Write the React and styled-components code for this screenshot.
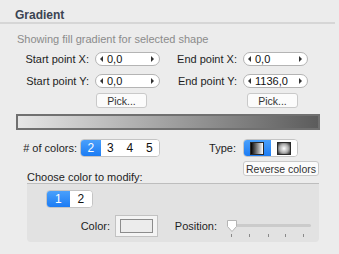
import styled, { createGlobalStyle } from 'styled-components';

const Global = createGlobalStyle`
  html, body {
    margin: 0;
    background: #ececec;
  }
  body {
    font-family: "Liberation Sans", Arial, sans-serif;
    font-size: 11px;
    color: #1e1e1e;
  }
`;

const Panel = styled.div`
  width: 339px;
  height: 254px;
  box-sizing: border-box;
  padding-top: 8px;
`;

const Header = styled.div`
  width: 320px;
  height: 14px;
  line-height: 14px;
  padding-left: 15px;
  font-weight: bold;
  font-size: 12px;
  color: #3b4453;
  border-bottom: 2px solid #d6d6d6;
`;

const Subtitle = styled.div`
  margin: 9px 0 0 17px;
  color: #8b8b8b;
  line-height: 13px;
`;

// Сетка начальной и конечной точек
const PointGrid = styled.div`
  display: grid;
  grid-template-columns: 160px 148px;
  row-gap: 8px;
  margin-top: 6px;
`;

const Field = styled.div`
  display: flex;
  justify-content: flex-end;
  align-items: center;
  gap: 6px;
  height: 14px;
`;

const Stepper = styled.div`
  height: 12px;
  border: 1px solid #b4b4b4;
  border-radius: 7px;
  background: #fff;
  display: flex;
  align-items: center;
  padding: 0 5px 0 4px;
  box-sizing: content-box;
  width: 54px;
  font-size: 11px;
  color: #111;
`;

const Arrow = styled.span`
  width: 0;
  height: 0;
  border-top: 3px solid transparent;
  border-bottom: 3px solid transparent;
  ${p => (p.$dir === 'left' ? 'border-right: 3px solid #333;' : 'border-left: 3px solid #333;')}
`;

const StepValue = styled.span`
  flex: 1;
  padding-left: 4px;
`;

const PickRow = styled.div`
  display: flex;
  margin-top: 5px;
`;

const Button = styled.div`
  height: 13px;
  border: 1px solid #c9c9c9;
  border-radius: 3px;
  background: #fbfbfb;
  color: #333;
  display: flex;
  align-items: center;
  justify-content: center;
  font-size: 10.5px;
  width: ${p => p.$w}px;
  margin-left: ${p => p.$ml ?? 0}px;
`;

const GradientBar = styled.div`
  margin: 6px 0 0 16px;
  width: 300px;
  height: 12px;
  border: 2px solid #707070;
  background: linear-gradient(to right, #e6e6e6, #5c5c5c);
`;

const OptionsRow = styled.div`
  display: flex;
  align-items: center;
  margin-top: 9px;
  height: 18px;
`;

const Label = styled.span`
  text-align: right;
  width: ${p => p.$w}px;
  margin-right: ${p => p.$mr ?? 3}px;
`;

const Segmented = styled.div`
  display: flex;
  height: 16px;
  width: fit-content;
  border: 1px solid #c4c4c4;
  border-radius: 4px;
  background: #fff;
  overflow: hidden;
`;

const Segment = styled.div`
  width: ${p => p.$w}px;
  display: flex;
  align-items: center;
  justify-content: center;
  font-size: 12px;
  color: ${p => (p.$active ? '#fff' : '#111')};
  background: ${p => (p.$active ? 'linear-gradient(#4aa0fb, #1c7cf4)' : '#fff')};
`;

const Swatch = styled.div`
  width: 12px;
  height: 11px;
  background: ${p =>
    p.$radial
      ? 'radial-gradient(circle, #fff 0%, #aaa 55%, #222 100%)'
      : 'linear-gradient(to right, #000, #fff)'};
  border: 1px solid #2a2a2a;
`;

const ChooseRow = styled.div`
  display: flex;
  align-items: flex-start;
  margin-top: 4px;
  height: 22px;
`;

const ChooseTitle = styled.div`
  margin: 10px 0 0 27px;
  width: 216px;
  line-height: 13px;
`;

const Box = styled.div`
  margin-left: 27px;
  width: 292px;
  height: 59px;
  box-sizing: border-box;
  background: #e2e2e2;
  border-top: 1px solid #bdbdbd;
  border-radius: 0 0 4px 4px;
  padding: 6px 0 0 19px;
`;

const ColorRow = styled.div`
  display: flex;
  align-items: center;
  margin-top: 7px;
`;

const Well = styled.div`
  width: 43px;
  height: 22px;
  box-sizing: border-box;
  border: 1px solid #c2c2c2;
  background: #f4f4f4;
  padding: 3px 4px;
  margin-left: 5px;
`;

const WellInner = styled.div`
  height: 100%;
  box-sizing: border-box;
  border: 1px solid #8c8c8c;
  background: #ececec;
`;

const Slider = styled.div`
  position: relative;
  width: 84px;
  height: 22px;
  margin-left: 10px;
`;

const Track = styled.div`
  position: absolute;
  left: 0;
  right: 0;
  top: 9px;
  height: 3px;
  border-radius: 2px;
  background: #cbcbcb;
`;

const Thumb = styled.svg`
  position: absolute;
  left: -1px;
  top: 4px;
`;

const Tick = styled.div`
  position: absolute;
  top: 19px;
  width: 1px;
  height: 3px;
  background: #8a8a8a;
`;

const Point = ({ label, value }) => (
  <Field>
    <span>{label}</span>
    <Stepper>
      <Arrow $dir="left" />
      <StepValue>{value}</StepValue>
      <Arrow $dir="right" />
    </Stepper>
  </Field>
);

export default function App() {
  return (
    <Panel>
      <Global />
      <Header>Gradient</Header>
      <Subtitle>Showing fill gradient for selected shape</Subtitle>
      <PointGrid>
        <Point label="Start point X:" value="0,0" />
        <Point label="End point X:" value="0,0" />
        <Point label="Start point Y:" value="0,0" />
        <Point label="End point Y:" value="1136,0" />
      </PointGrid>
      <PickRow>
        <Button $w={49} $ml={96}>Pick...</Button>
        <Button $w={49} $ml={100}>Pick...</Button>
      </PickRow>
      <GradientBar />
      <OptionsRow>
        <Label $w={77}># of colors:</Label>
        <Segmented>
          {[2, 3, 4, 5].map(n => (
            <Segment key={n} $w={19.5} $active={n === 2}>{n}</Segment>
          ))}
        </Segmented>
        <Label $w={76} $mr={7}>Type:</Label>
        <Segmented>
          <Segment $w={26.5} $active><Swatch /></Segment>
          <Segment $w={26.5}><Swatch $radial /></Segment>
        </Segmented>
      </OptionsRow>
      <ChooseRow>
        <ChooseTitle>Choose color to modify:</ChooseTitle>
        <Button $w={74}>Reverse colors</Button>
      </ChooseRow>
      <Box>
        <Segmented>
          <Segment $w={22.5} $active>1</Segment>
          <Segment $w={22.5}>2</Segment>
        </Segmented>
        <ColorRow>
          <Label $w={64} $mr={0}>Color:</Label>
          <Well><WellInner /></Well>
          <Label $w={59} $mr={0}>Position:</Label>
          <Slider>
            <Track />
            {[4, 22, 41, 58, 76].map(x => (
              <Tick key={x} style={{ left: x }} />
            ))}
            <Thumb width="12" height="14" viewBox="0 0 12 14">
              <path d="M1.5 1.5 h9 v6 l-4.5 5 l-4.5 -5 z" fill="#fff" stroke="#b5b5b5" strokeLinejoin="round" />
            </Thumb>
          </Slider>
        </ColorRow>
      </Box>
    </Panel>
  );
}
